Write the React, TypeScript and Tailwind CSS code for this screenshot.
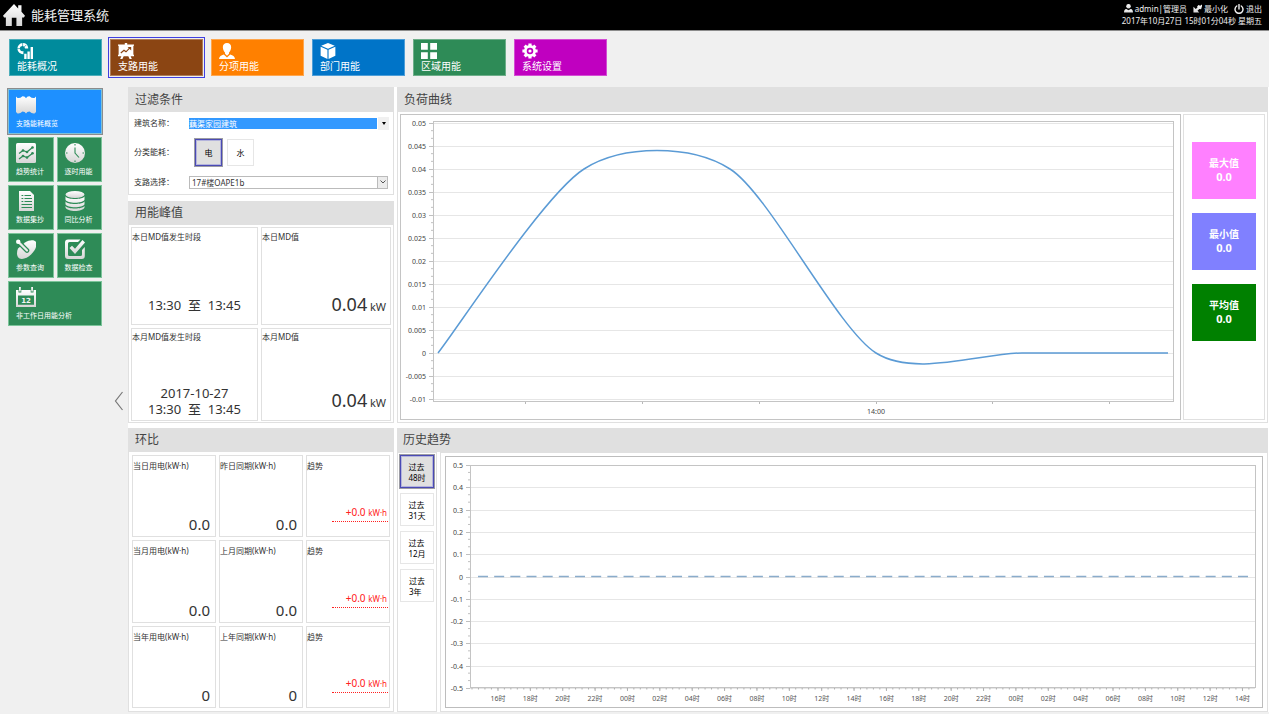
import { useState, type ReactNode } from "react"

type IconProps = { name: string, size?: string }

function Icon({ name, size = "size-5" }: IconProps) {
  const fill = "url(#silver)";

  return (
    <svg viewBox="0 0 20 20" className={size + " shrink-0"} fill={fill} aria-hidden="true">
      {name === 'home' && <>
        <path d="M10 0 13.800 4V1.200h3V7L20 10.600l-1 1.600h-1.600V20h-5.200v-7.500H8V20H2.600v-7.800H1L0 10.600z" />
      </>}
      {name === 'overview' && <>
        <path fill="#fff" fillRule="evenodd" d="M7 0a7 7 0 1 0 1 14V9.900a3.200 3.200 0 1 1 2-2.900h4V6A7 7 0 0 0 7 0z" />
        <path d="M7 0v4M0 7h4M11.500 2.500 9 5" stroke="#008b9c" strokeWidth=".8" />
        <path fill="#fff" d="M9 13.500h3V20H9zM13 10.500h3V20h-3zM17 5h3v15h-3z" />
      </>}
      {name === 'board' && <>
        <path fill="#fff" d="M8.500 0h3v1.800H20v1.700h-.8v11.300H20v1.700h-4.200L17.300 20h-2.800l-1.600-3.500H7.100L5.500 20H2.700l1.500-3.500H0v-1.700h.8V3.500H0V1.800h8.500z" />
        <path d="m3.500 12.500 4-3.500 2.500 2 4.500-4.500" fill="none" stroke="#8b4513" strokeWidth="1.500" />
        <path d="M12 5h4.500v4.500z" fill="#8b4513" />
      </>}
      {name === 'person' && <>
        <path fill="#fff" d="M10 0c3.300 0 5.300 2.200 5.200 5.400-.1 3-1.600 5.600-2.700 6.400v1.700L10 16l-2.500-2.500v-1.700C6.400 11 4.900 8.400 4.800 5.400 4.700 2.200 6.700 0 10 0z" />
        <path fill="#fff" d="M6 14.500 10 18l4-3.500c3.500 1 5.500 2 6 5.500H0c.5-3.500 2.500-4.500 6-5.500z" />
      </>}
      {name === 'cube' && <>
        <path fill="#fff" d="m10 0 8.500 3.500L10 7.200 1.500 3.500zM.8 4.800l8.500 3.700V20L.8 16zM19.200 4.800l-8.500 3.700V20l8.500-4z" />
      </>}
      {name === 'grid' && <path fill="#fff" d="M0 0h8.500v8.500H0zM11.500 0H20v8.500h-8.500zM0 11.500h8.500V20H0zM11.500 11.500H20V20h-8.500z" />}
      {name === 'gear' && <>
        <circle cx="10" cy="10" r="5.800" fill="none" stroke="#fff" strokeWidth="3.400" />
        <g stroke="#fff" strokeWidth="4">
          <path d="M10 .5v3.500M10 16v3.500M.5 10h3.500M16 10h3.500M3.300 3.300l2.500 2.500M14.200 14.200l2.500 2.500M3.300 16.700l2.500-2.500M14.200 5.800l2.500-2.500" />
        </g>
        <circle cx="10" cy="10" r="2" fill="#fff" />
      </>}
      {name === 'map' && <path d="M0 1.500 1.500 3Q4 3.500 6.500 1.200 9 1 10 3.200 11 1 13.500 1.200 16 3.500 18.500 3L20 1.500V17l-1.500 1.500Q16 19 13.500 16.500 11 16.500 10 18.500 9 16.500 6.500 16.500 4 19 1.500 18.500L0 17z" />}
      {name === 'trend' && <>
        <rect width="20" height="20" rx="1.500" />
        <g fill="none" stroke="#2e8b57" strokeWidth="1.200">
          <path d="m3 10.500 4-3 4 1.500 6-5M3 16l4-3 4 1.500 6-4.500" />
        </g>
        <g fill="#2e8b57">
          <circle cx="7" cy="7.500" r="1.300" /><circle cx="11" cy="9" r="1.300" /><circle cx="16.500" cy="4.500" r="1.300" />
          <circle cx="7" cy="13" r="1.300" /><circle cx="11" cy="14.500" r="1.300" /><circle cx="16.500" cy="10.300" r="1.300" />
        </g>
      </>}
      {name === 'clock' && <>
        <circle cx="10" cy="10" r="10" />
        <path d="M10 4.500V10l4 4.500M10 1v1.500M10 17.500V19M1 10h1.500M17.500 10H19" fill="none" stroke="#2e8b57" strokeWidth="1.100" />
      </>}
      {name === 'document' && <>
        <path d="M3 0h11l4 4v16H3z" />
        <path d="M5.500 4.500h1.800M8.500 4.500H15M5.500 7.500h1.800M8.500 7.500H16M5.500 10.500h1.800M8.500 10.500H16M5.500 13.500H16M5.500 16.500H16" stroke="#2e8b57" />
      </>}
      {name === 'database' && <>
        <ellipse cx="10" cy="3.500" rx="9.500" ry="3.500" />
        <path d="M.5 5.300C2 9 18 9 19.500 5.300v3.500c-1.500 4-17.500 4-19 0zM.5 10.300c1.500 3.700 17.500 3.700 19 0v3c-1.500 4-17.500 4-19 0zM.5 14.800c1.500 3.700 17.500 3.700 19 0v1.700c-1.500 4.600-17.500 4.600-19 0z" />
      </>}
      {name === 'dish' && <>
        <path d="M9 3.500C13.500.5 18.500.5 20 3c1.500 3.500-1 8.500-4.700 12.300C11.500 19 6.500 21 3.500 19.500.8 18 .3 13.500 2 9.500z" />
        <path d="m2.500 3 8.500 8.500" fill="none" stroke="#2e8b57" strokeWidth="4.600" strokeLinecap="round" />
        <path d="m2.500 3 8.500 8.500" fill="none" stroke="#ececec" strokeWidth="2.200" strokeLinecap="round" />
        <circle cx="2.200" cy="2.700" r="2.200" fill="#fff" />
      </>}
      {name === 'check' && <>
        <path d="M3 .5h12.500L13 3H4.500Q3 3 3 4.500v11Q3 17 4.500 17h11q1.500 0 1.500-1.500V11l2.800-3v9q0 3-3 3H3q-3 0-3-3V3.500q0-3 3-3z" />
        <path d="M4.500 9 7 6.800l3 3L17.500 1 20 3.500 10 15z" />
      </>}
      {name === 'calendar' && <>
        <path fillRule="evenodd" d="M0 3h2.500v2.500h2.800V3h9.400v2.500h2.800V3H20v17H0zM2 8.500v9.300h16V8.500z" />
        <path d="M3 0h1.800v4.500H3zM15.200 0H17v4.500h-1.800z" />
        <text x="10" y="16" textAnchor="middle" fontSize="7" fontWeight="bold" fill="#f4f4f4" fontFamily="DejaVu Sans, sans-serif">12</text>
      </>}
      {name === 'user' && <>
        <circle cx="10" cy="5" r="5" />
        <path d="M0 19c0-5 2-8 5-8l5 3 5-3c3 0 5 3 5 8z" />
      </>}
      {name === 'minimize' && <path d="M1 6v13h13l-4-4 4-4 4 .5L20 5V1l-4 3-4-2-3 4 1 2-4 3z" />}
      {name === 'power' && <path d="M10 1v9M5.500 4a8 8 0 1 0 9 0" fill="none" stroke="#f2f2f2" strokeWidth="2.800" strokeLinecap="round" />}
    </svg>
  )
}

const tabs = [
  { label: '能耗概况', icon: 'overview', color: 'bg-[#008b9c]' },
  { label: '支路用能', icon: 'board', color: 'bg-[#8b4513]' },
  { label: '分项用能', icon: 'person', color: 'bg-[#ff8000]' },
  { label: '部门用能', icon: 'cube', color: 'bg-[#0074c8]' },
  { label: '区域用能', icon: 'grid', color: 'bg-[#2e8b57]' },
  { label: '系统设置', icon: 'gear', color: 'bg-[#c000c0]' },
];

const tiles = [
  { label: '支路能耗概览', icon: 'map', wide: true },
  { label: '趋势统计', icon: 'trend' },
  { label: '逐时用能', icon: 'clock' },
  { label: '数据集抄', icon: 'document' },
  { label: '同比分析', icon: 'database' },
  { label: '参数查询', icon: 'dish' },
  { label: '数据检查', icon: 'check' },
  { label: '非工作日用能分析', icon: 'calendar', wide: true },
];

const comparisons = [
  { current: '当日用电(kW·h)', previous: '昨日同期(kW·h)', value: '0.0' },
  { current: '当月用电(kW·h)', previous: '上月同期(kW·h)', value: '0.0' },
  { current: '当年用电(kW·h)', previous: '上年同期(kW·h)', value: '0' },
];

const stats = [
  { label: '最大值', color: 'bg-[#ff80ff]' },
  { label: '最小值', color: 'bg-[#8080ff]' },
  { label: '平均值', color: 'bg-[#008000]' },
];

const ranges = [['过去', '48时'], ['过去', '31天'], ['过去', '12月'], ['过去', '3年']];

function Panel({ title, className = "", children }: { title: string, className?: string, children: ReactNode }) {
  return (
    <section className={"flex flex-col bg-white " + className}>
      <h2 className="flex h-6 shrink-0 items-center bg-[#e0e0e0] pl-1.5 text-[12px] leading-4 text-[#444]">{title}</h2>
      {children}
    </section>
  )
}

function Cell({ label, className = "pt-1", children }: { label: string, className?: string, children: ReactNode }) {
  return (
    <div className={"flex flex-col justify-between border border-[#e0e0e0] " + className}>
      <h3 className="text-[8px] leading-[10px] whitespace-nowrap">{label}</h3>
      {children}
    </div>
  )
}

function Toggle({ active, onClick, className, children }: { active: boolean, onClick: () => void, className: string, children: ReactNode }) {
  const look = active
    ? "border-[#4a4ab4] bg-[#e0e0e0] shadow-[0_0_0_1px_#9c9ca4,inset_0_0_0_1px_#b4b4dc]"
    : "border-[#e6e6e6] bg-white";
  return (
    <button type="button" aria-pressed={active} onClick={onClick} className={"flex items-center justify-center border text-[8px] leading-[11px] text-black " + look + " " + className}>
      {children}
    </button>
  )
}

// cardinal spline through the points, tension 0.8
function spline(points: number[][]) {
  let d = `M${points[0][0]} ${points[0][1]}`;
  for (let i = 0; i < points.length - 1; i++) {
    const p0 = points[i - 1] || points[i];
    const p1 = points[i];
    const p2 = points[i + 1];
    const p3 = points[i + 2] || p2;
    const k = 0.8 / 6;
    d += `C${p1[0] + (p2[0] - p0[0]) * k} ${p1[1] + (p2[1] - p0[1]) * k} ${p2[0] - (p3[0] - p1[0]) * k} ${p2[1] - (p3[1] - p1[1]) * k} ${p2[0]} ${p2[1]}`;
  }
  return d;
}

type AxisProps = { left: number, right: number, top: number, step: number, labels: string[], size: number }

function YAxis({ left, right, top, step, labels, size }: AxisProps) {
  return (
    <g>
      {labels.map((label, i) => {
        const y = top + i * step;
        return (
          <g key={label}>
            <path d={`M${left} ${Math.round(y) + 0.5}H${right}`} stroke="#e6e6e6" />
            <path d={`M${left - 4} ${Math.round(y) + 0.5}h4`} stroke="#c0c0c0" />
            {i < labels.length - 1 &&
              <path d={`M${left - 2} ${y + step / 3}h2M${left - 2} ${y + step * 2 / 3}h2`} stroke="#c0c0c0" />
            }
            <text x={left - 7} y={y + 3} textAnchor="end" fontSize={size} fill="#444">{label}</text>
          </g>
        )
      })}
    </g>
  )
}

function LoadChart() {
  const labels = ['0.05', '0.045', '0.04', '0.035', '0.03', '0.025', '0.02', '0.015', '0.01', '0.005', '0', '-0.005', '-0.01'];
  const values = [0, 0.04, 0.04, 0, 0, 0];
  const points = values.map((v, i) => [37 + i * 146, 238 - v * 4600]);

  return (
    <svg viewBox="0 0 779 304" className="block h-auto w-full" role="img" aria-label="负荷曲线">
      <YAxis left={32} right={772} top={8} step={23} labels={labels} size={7} />
      <rect x="32.500" y="6.500" width="740" height="280" fill="none" stroke="#c4c4c4" />
      {[124, 241, 358, 475, 591, 708].map(x => <path key={x} d={`M${x}.5 287v2`} stroke="#b8b8b8" />)}
      <text x="475" y="299" textAnchor="middle" fontSize="7" fill="#444">14:00</text>
      <path d={spline(points)} fill="none" stroke="#5b9bd5" strokeWidth="1.500" />
    </svg>
  )
}

function HistoryChart() {
  const labels = ['0.5', '0.4', '0.3', '0.2', '0.1', '0', '-0.1', '-0.2', '-0.3', '-0.4', '-0.5'];
  const pitch = 32.37;
  const hours = Array.from({ length: 24 }, (_, i) => String((16 + i * 2) % 24).padStart(2, '0') + '时');
  const minors = Array.from({ length: 121 }, (_, i) => 26 + i * pitch / 5).filter(x => x < 808);

  return (
    <svg viewBox="0 0 816 250" className="block h-auto w-full" role="img" aria-label="历史趋势">
      <YAxis left={24} right={809} top={8} step={22.3} labels={labels} size={7} />
      <rect x="24.500" y="8.500" width="785" height="222" fill="none" stroke="#c4c4c4" />
      {minors.map(x => <path key={x} d={`M${x} 231v1.500`} stroke="#b0b0b0" />)}
      {hours.map((hour, i) => {
        const x = 52 + i * pitch;
        return (
          <g key={i}>
            <path d={`M${x} 231v3`} stroke="#b0b0b0" />
            <text x={x} y="244" textAnchor="middle" fontSize="7" fill="#555">{hour}</text>
          </g>
        )
      })}
      <path d="M32 119.500h771" stroke="#8aaccb" strokeWidth="1.300" strokeDasharray="10 6.170" />
    </svg>
  )
}

export default function App() {
  const [tab, setTab] = useState(1);
  const [tile, setTile] = useState(0);
  const [energy, setEnergy] = useState('电');
  const [range, setRange] = useState(0);
  const [collapsed, setCollapsed] = useState(false);

  return (
    <div className="flex min-h-screen flex-col bg-[#f0f0f0] font-['Noto_Sans','Noto_Sans_CJK_SC',sans-serif] text-[#333]">
      <svg width="0" height="0" className="absolute" aria-hidden="true">
        <linearGradient id="silver" x1="0" y1="0" x2="0" y2="1">
          <stop offset="0" stopColor="#fff" />
          <stop offset="1" stopColor="#d6d6d6" />
        </linearGradient>
      </svg>

      <header className="flex h-[31px] items-center justify-between border-b border-[#8c8c8c] bg-black pr-[7px] pl-[3px] text-[#f0f0f0]">
        <div className="flex items-center gap-1.5">
          <Icon name="home" size="size-[22px]" />
          <h1 className="text-[13px] leading-5">能耗管理系统</h1>
        </div>
        <div className="pb-px text-[8px] leading-3">
          <div className="flex justify-end gap-1.5">
            <span className="flex items-center gap-0.5"><Icon name="user" size="size-[9px]" />admin|管理员</span>
            <button type="button" className="flex items-center gap-0.5"><Icon name="minimize" size="size-[9px]" />最小化</button>
            <button type="button" className="flex items-center gap-0.5"><Icon name="power" size="size-[10px]" />退出</button>
          </div>
          <div className="text-right">2017年10月27日 15时01分04秒 星期五</div>
        </div>
      </header>

      <nav className="flex gap-2 px-[9px] pt-2 pb-[11px]">
        {tabs.map((t, i) => (
          <button
            key={t.label}
            type="button"
            onClick={() => setTab(i)}
            className={"flex h-[37px] w-[93px] flex-col gap-px border border-white/30 px-[7px] pt-[3px] text-left text-[10px] leading-3 text-white " + t.color + (i === tab ? " outline outline-offset-1 outline-[#4040e0]" : "")}
          >
            <Icon name={t.icon} size="size-4" />
            {t.label}
          </button>
        ))}
      </nav>

      <div className="flex flex-1">
        {!collapsed &&
          <aside className="grid w-[102px] shrink-0 auto-rows-[45px] grid-cols-2 content-start gap-[3px] pt-0.5 pl-2">
            {tiles.map((t, i) => (
              <button
                key={t.label}
                type="button"
                onClick={() => setTile(i)}
                className={"flex flex-col gap-1 border pt-[5px] pl-[7px] text-left text-[7px] leading-[10px] whitespace-nowrap text-white " + (t.wide ? "col-span-2 " : "") + (i === tile ? "border-[#7ec0d8] bg-[#1e90ff] outline outline-[#8c8c8c]" : "border-[#7cc49a] bg-[#2e8b57]")}
              >
                <Icon name={t.icon} />
                {t.label}
              </button>
            ))}
          </aside>
        }
        <button type="button" aria-label="收起" onClick={() => setCollapsed(!collapsed)} className="flex w-[26px] shrink-0 items-center justify-center pl-2">
          <svg viewBox="0 0 10 20" className="h-5 w-2.5" fill="none" stroke="#777" strokeWidth="1.200"><path d="M8.500 1 1.500 10l7 9" /></svg>
        </button>

        <main className="mb-0.5 grid min-w-0 flex-1 grid-cols-[266px_minmax(0,1fr)] gap-x-[3px] gap-y-[5px] bg-white pr-px">
          <div className="flex flex-col gap-1.5">
            <Panel title="过滤条件" className="border border-[#e0e0e0]">
              <div className="flex flex-col pl-[5px] text-[8px]">
                <div className="flex h-[22px] items-center">
                  <label htmlFor="building" className="w-[55px]">建筑名称：</label>
                  <select id="building" className="h-[11px] w-[188px] appearance-none bg-[#3399ff] leading-[11px] text-white">
                    <option>藕渠家园建筑</option>
                  </select>
                  <span className="pointer-events-none ml-px flex h-[13px] w-[11px] items-center justify-center bg-[#f0f0f0]">
                    <svg viewBox="0 0 4 3" className="h-[3px] w-1"><path d="M0 0h4L2 3z" /></svg>
                  </span>
                </div>
                <div className="flex h-9 items-center">
                  <span className="w-[61px]">分类能耗：</span>
                  <div className="flex gap-[5px]">
                    {['电', '水'].map(e => (
                      <Toggle key={e} active={energy === e} onClick={() => setEnergy(e)} className="size-[27px]">{e}</Toggle>
                    ))}
                  </div>
                </div>
                <div className="flex h-6 items-center">
                  <label htmlFor="branch" className="w-[55px]">支路选择：</label>
                  <div className="relative">
                    <select id="branch" className="block h-[13px] w-[199px] appearance-none border border-[#bbb] pl-0.5 leading-[11px]">
                      <option>17#楼OAPE1b</option>
                    </select>
                    <span className="pointer-events-none absolute inset-y-px right-px flex w-2.5 items-center justify-center border-l border-[#bbb] bg-[#ececec]">
                      <svg viewBox="0 0 6 4" className="h-1 w-1.5" fill="none" stroke="#555"><path d="m.5.5 2.500 2.500L5.500.5" /></svg>
                    </span>
                  </div>
                </div>
              </div>
            </Panel>

            <Panel title="用能峰值" className="flex-1 border border-t-0 border-[#e0e0e0]">
              <div className="grid flex-1 grid-cols-[127px_1fr] grid-rows-[97fr_93fr] gap-[3px] p-0.5 pb-px">
                <Cell label="本日MD值发生时段">
                  <p className="pb-[11px] text-center text-[13px] leading-4">13:30 &nbsp;至&nbsp; 13:45</p>
                </Cell>
                <Cell label="本日MD值">
                  <p className="pr-1 pb-[7px] text-right text-[18px] leading-5">0.04 <span className="-ml-0.5 text-[11px]">kW</span></p>
                </Cell>
                <Cell label="本月MD值发生时段" className="pt-[3px]">
                  <p className="pb-[3px] text-center text-[13px] leading-4">2017-10-27<br />13:30 &nbsp;至&nbsp; 13:45</p>
                </Cell>
                <Cell label="本月MD值" className="pt-[3px]">
                  <p className="pr-1 pb-[7px] text-right text-[18px] leading-5">0.04 <span className="-ml-0.5 text-[11px]">kW</span></p>
                </Cell>
              </div>
            </Panel>
          </div>

          <Panel title="负荷曲线" className="border border-[#e0e0e0]">
            <div className="flex flex-1 gap-0.5 p-0.5">
              <div className="min-w-0 flex-1 border border-[#c4c4c4]">
                <LoadChart />
              </div>
              <div className="flex w-[82px] flex-col items-center gap-3.5 border border-[#e0e0e0] pt-[27px]">
                {stats.map(s => (
                  <div key={s.label} className={"flex h-[57px] w-16 flex-col items-center justify-center pb-0.5 text-[10px] leading-[14px] font-bold text-white " + s.color}>
                    <span>{s.label}</span>
                    <span className="text-[11px]">0.0</span>
                  </div>
                ))}
              </div>
            </div>
          </Panel>

          <Panel title="环比" className="border border-t-0 border-[#e0e0e0]">
            <div className="grid flex-1 grid-cols-3 grid-rows-3 gap-[3px] p-[3px]">
              {comparisons.map(c => [
                <Cell key={c.current} label={c.current} className="pt-[5px]">
                  <p className="pr-[5px] pb-1 text-right text-[15px] leading-4">{c.value}</p>
                </Cell>,
                <Cell key={c.previous} label={c.previous} className="pt-[5px]">
                  <p className="pr-[5px] pb-1 text-right text-[15px] leading-4">{c.value}</p>
                </Cell>,
                <Cell key={c.current + 'trend'} label="趋势" className="pt-[5px]">
                  <p className="mr-px mb-3.5 ml-[25px] border-b border-dotted border-b-[#ff2020] pr-px pb-0.5 text-right text-[10px] leading-3 text-[#ff2020]">+0.0 <span className="text-[8px]">kW·h</span></p>
                </Cell>,
              ])}
            </div>
          </Panel>

          <Panel title="历史趋势">
            <div className="flex flex-1 gap-[3px]">
              <div className="flex w-10 shrink-0 flex-col gap-[5px] border border-[#e0e0e0] p-0.5">
                {ranges.map(([first, second], i) => (
                  <Toggle key={second} active={range === i} onClick={() => setRange(i)} className="h-[33px] w-[34px]">
                    <span className="text-left">{first}<br />{second}</span>
                  </Toggle>
                ))}
              </div>
              <div className="min-w-0 flex-1 border border-[#e0e0e0] px-1 py-[3px]">
                <div className="border border-[#bdbdbd]">
                  <HistoryChart />
                </div>
              </div>
            </div>
          </Panel>
        </main>
      </div>
    </div>
  )
}
